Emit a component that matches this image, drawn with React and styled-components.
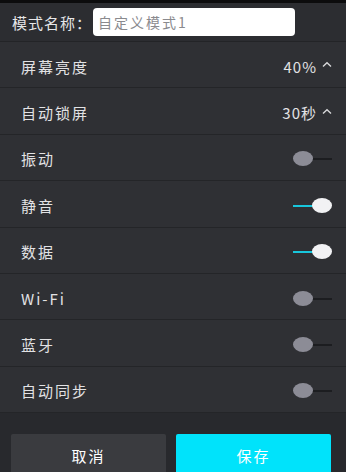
import React from 'react';
import styled, { createGlobalStyle } from 'styled-components';

const GlobalStyle = createGlobalStyle`
  html, body {
    margin: 0;
    padding: 0;
    background: #2f3034;
  }
  body {
    font-family: "Noto Sans CJK SC", "Noto Sans", sans-serif;
  }
`;

const settings = [
  { label: '屏幕亮度', value: '40%', kind: 'select' },
  { label: '自动锁屏', value: '30秒', kind: 'select' },
  { label: '振动', on: false, kind: 'toggle' },
  { label: '静音', on: true, kind: 'toggle' },
  { label: '数据', on: true, kind: 'toggle' },
  { label: 'Wi-Fi', on: false, kind: 'toggle' },
  { label: '蓝牙', on: false, kind: 'toggle' },
  { label: '自动同步', on: false, kind: 'toggle' },
];

function Toggle({ on }) {
  return (
    <Switch>
      <Track on={on} />
      <Knob on={on} />
    </Switch>
  );
}

export default function App() {
  return (
    <Page>
      <GlobalStyle />
      <TopStrip />
      <Header>
        <HeaderLabel>模式名称：</HeaderLabel>
        <NameInput>自定义模式1</NameInput>
      </Header>
      <List>
        {settings.map((s) => (
          <Row key={s.label}>
            <Label>{s.label}</Label>
            {s.kind === 'select' ? (
              <Value>
                {s.value}
                <Caret viewBox="0 0 10 6">
                  <path d="M1 5 L5 1.2 L9 5" />
                </Caret>
              </Value>
            ) : (
              <Toggle on={s.on} />
            )}
          </Row>
        ))}
      </List>
      <Footer>
        <Button>取消</Button>
        <Button primary>保存</Button>
      </Footer>
    </Page>
  );
}

const Page = styled.div`
  width: 346px;
  height: 472px;
  overflow: hidden;
  display: flex;
  flex-direction: column;
  background: #2f3034;
`;

const TopStrip = styled.div`
  flex-shrink: 0;
  height: 3px;
  background: #0c0c0d;
`;

const Header = styled.div`
  flex-shrink: 0;
  height: 38px;
  display: flex;
  align-items: center;
  padding-left: 12px;
  background: #2c2d31;
  border-bottom: 1px solid #232427;
`;

const HeaderLabel = styled.span`
  font-size: 15px;
  letter-spacing: 1px;
  color: #e6e6e8;
`;

const NameInput = styled.div`
  margin-left: 1px;
  width: 202px;
  height: 28px;
  box-sizing: border-box;
  padding-left: 5px;
  display: flex;
  align-items: center;
  background: #ffffff;
  border-radius: 4px;
  font-size: 14px;
  letter-spacing: 2px;
  color: #8a8a8e;
`;

const List = styled.div`
  flex-shrink: 0;
  display: flex;
  flex-direction: column;
`;

const Row = styled.div`
  flex-shrink: 0;
  height: 46.4px;
  padding-top: 3px;
  box-sizing: border-box;
  display: flex;
  align-items: center;
  justify-content: space-between;
  padding-left: 21px;
  padding-right: 14px;
  border-bottom: 1px solid #242528;
`;

const Label = styled.span`
  font-size: 15px;
  letter-spacing: 2px;
  color: #e2e2e4;
`;

const Value = styled.span`
  display: flex;
  align-items: center;
  font-size: 15px;
  letter-spacing: 1px;
  color: #e2e2e4;
`;

const Caret = styled.svg`
  width: 10px;
  height: 7px;
  margin-left: 5px;
  margin-bottom: 3px;
  fill: none;
  stroke: #d8d8da;
  stroke-width: 1.4;
`;

const Switch = styled.div`
  position: relative;
  width: 39px;
  height: 15px;
`;

const Track = styled.div`
  position: absolute;
  top: 7px;
  height: 2px;
  left: ${(p) => (p.on ? '0' : '19px')};
  width: 20px;
  background: ${(p) => (p.on ? '#18c6dc' : '#1c1d20')};
`;

const Knob = styled.div`
  position: absolute;
  top: 0;
  left: ${(p) => (p.on ? '19px' : '0')};
  width: 20px;
  height: 15px;
  border-radius: 50%;
  background: ${(p) => (p.on ? '#f2f2f4' : '#8c8c96')};
`;

const Footer = styled.div`
  flex: 1;
  min-height: 0;
  display: flex;
  gap: 10px;
  padding: 21px 15px 0 11px;
  background: #28292d;
`;

const Button = styled.div`
  flex: 1;
  flex-shrink: 0;
  height: 42px;
  display: flex;
  align-items: center;
  justify-content: center;
  border-radius: 2px;
  font-size: 15px;
  letter-spacing: 2px;
  color: #ffffff;
  background: ${(p) => (p.primary ? '#00e3fb' : '#3a3b3f')};
`;
